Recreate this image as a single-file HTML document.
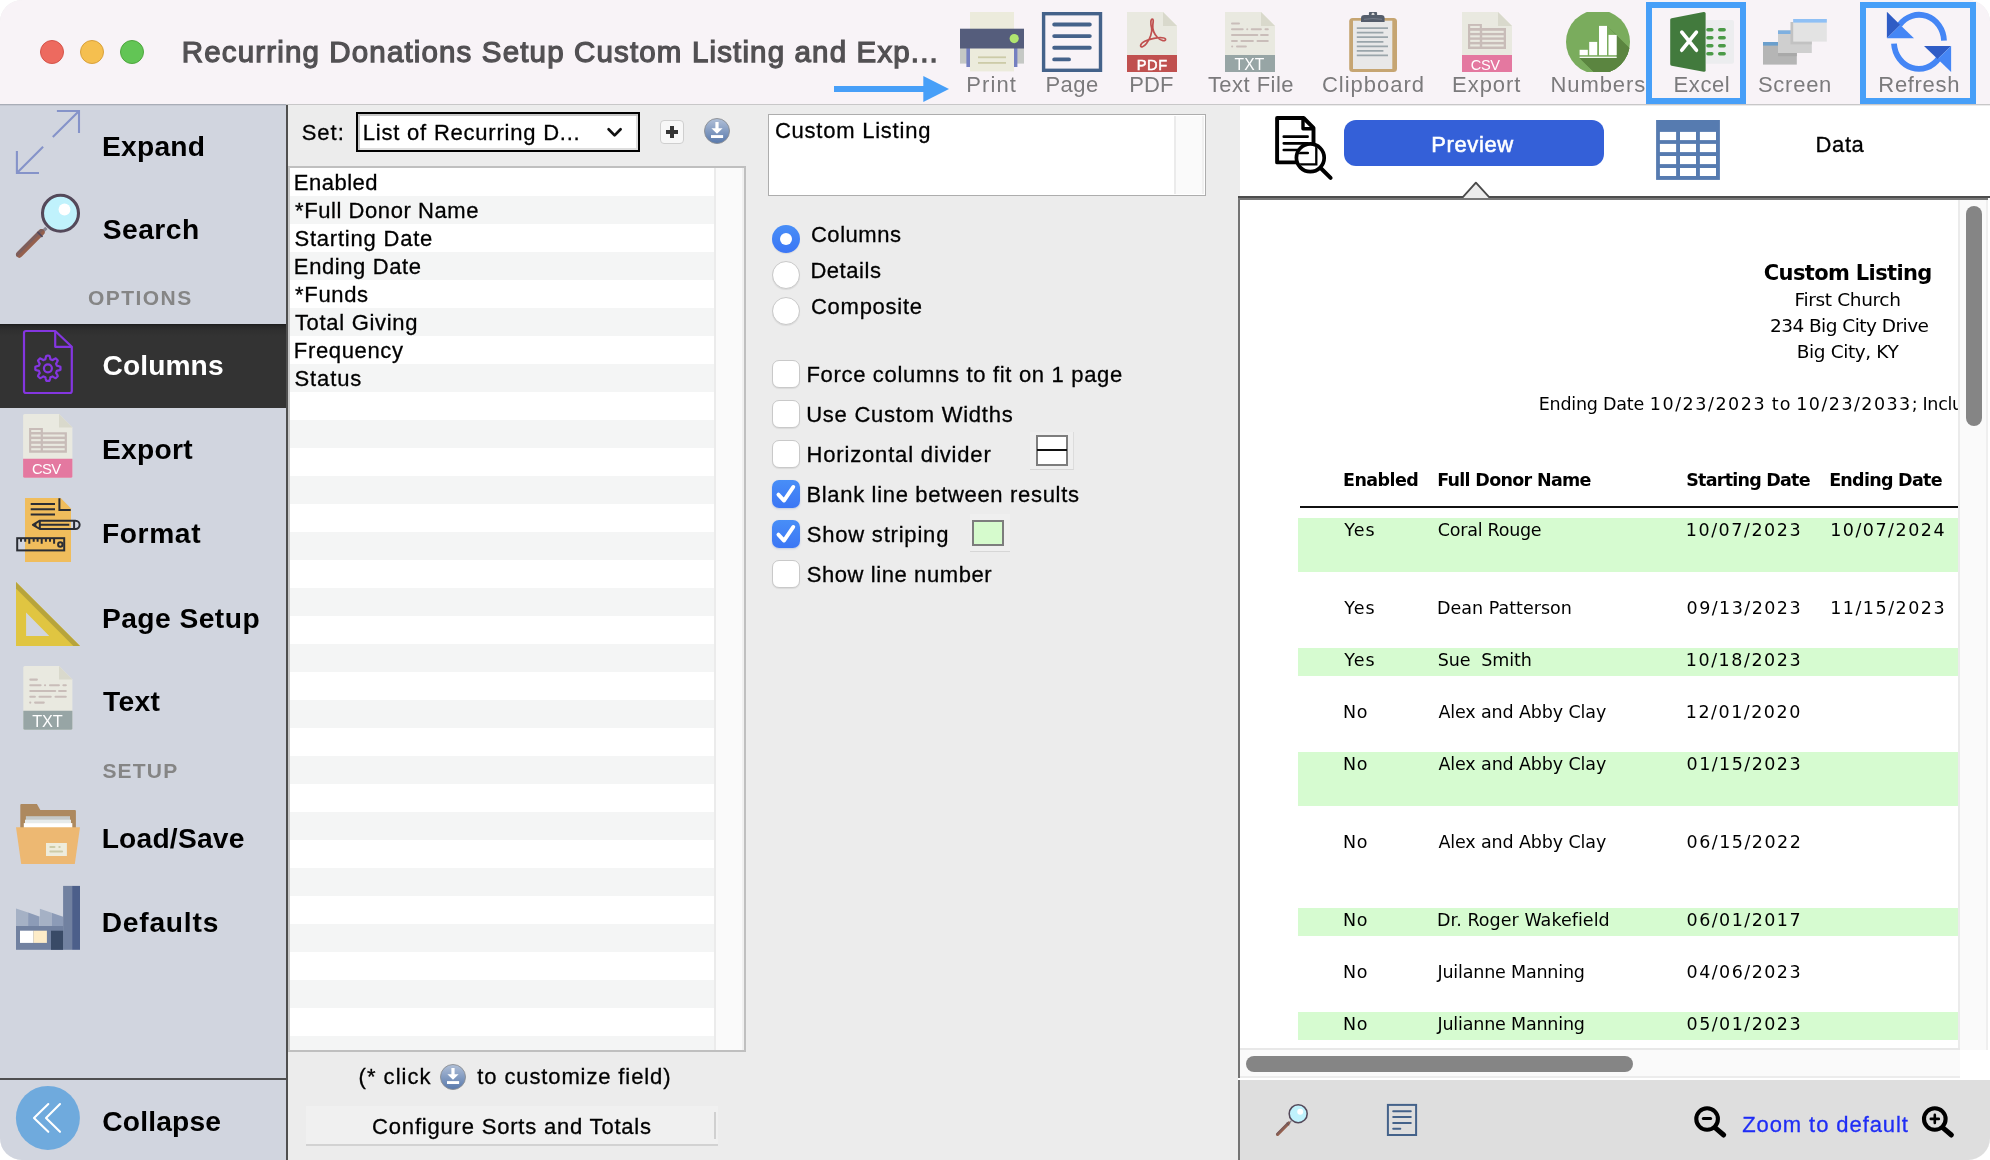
<!DOCTYPE html>
<html lang="en">
<head>
<meta charset="utf-8">
<title>Recurring Donations Setup Custom Listing and Export</title>
<style>
*{box-sizing:border-box;margin:0;padding:0}
html,body{width:1990px;height:1160px;overflow:hidden;background:#fff}
body{font-family:"Liberation Sans",sans-serif;color:#000;position:relative}
.abs{position:absolute}
#win{position:absolute;left:0;top:0;width:1990px;height:1160px;border-radius:22px;overflow:hidden;background:#ececec}
/* ---------- title bar ---------- */
#tbar{position:absolute;left:0;top:0;width:1990px;height:105px;background:#f8f3f7;border-bottom:1px solid #c8c7c8}
.tl{position:absolute;top:40px;width:24px;height:24px;border-radius:50%}
#title{position:absolute;left:183px;top:34px;font-size:29.5px;font-weight:bold;color:#4b4a4c;white-space:nowrap;letter-spacing:-0.2px;line-height:36px}
.tool{position:absolute;top:70px;font-size:22px;color:#7b7a7c;white-space:nowrap;line-height:28px;transform:translateX(-50%)}
.hl{position:absolute;top:2px;height:102px;border:6px solid #479ff8}
/* ---------- sidebar ---------- */
#side{position:absolute;left:0;top:105px;width:286px;height:1055px;background:#d1d5df}
#sideb{position:absolute;left:286px;top:105px;width:2px;height:1055px;background:#4f4f4f}
.si{position:absolute;left:102px;font-size:28px;font-weight:bold;color:#000;white-space:nowrap;line-height:34px}
.sh{position:absolute;font-size:21px;font-weight:bold;color:#858585;white-space:nowrap;line-height:26px;letter-spacing:0.6px}
#sel{position:absolute;left:0;top:219px;width:286px;height:84px;background:linear-gradient(#1c1c1c 0,#282828 2px,#2f2f2f 6px,#333 12px)}
/* ---------- middle ---------- */
#mid{position:absolute;left:288px;top:105px;width:950px;height:1055px;background:#ececec}
.t22{position:absolute;font-size:22px;white-space:nowrap;line-height:28px;color:#000}
#list{position:absolute;left:288px;top:166px;width:458px;height:886px;background:#fff;border:2px solid #bfbfbf;border-left-color:#c9c9c9}
.row{position:absolute;left:0;width:424px;height:28px;font-size:22px;line-height:28px;padding-left:4px;white-space:nowrap}
.row.alt{background:#f4f5f5}
.cb{position:absolute;left:772px;width:28px;height:28px;border-radius:7px;background:#fff;border:1px solid #c9c9c9;box-shadow:0 1px 1px rgba(0,0,0,.08)}
.cb.on{background:linear-gradient(#488ef7,#3b76f5);border:none;box-shadow:0 1px 2px rgba(60,100,200,.25)}
.rd{position:absolute;left:772px;width:28px;height:28px;border-radius:50%;background:#fff;border:1px solid #c9c9c9;box-shadow:0 1px 1px rgba(0,0,0,.08)}
/* ---------- right ---------- */
#right{position:absolute;left:1240px;top:105px;width:750px;height:1055px;background:#fff}
.pv{position:absolute;font-family:"DejaVu Sans","Liberation Sans",sans-serif;font-size:18px;white-space:nowrap;line-height:24px;color:#000}
.stripe{position:absolute;left:1298px;width:660px;background:#d6fbd0}
</style>
</head>
<body>
<div id="win">

<!-- ================= TITLE BAR ================= -->
<div id="tbar">
  <div class="tl" style="left:40px;background:#ed6a5f;border:1px solid #d5544a"></div>
  <div class="tl" style="left:80px;background:#f5bf4f;border:1px solid #d9a13c"></div>
  <div class="tl" style="left:120px;background:#62c555;border:1px solid #4fa73f"></div>
  <svg class="abs" style="left:830px;top:72px" width="122" height="34" viewBox="830 72 122 34"><rect x="834" y="86" width="91" height="6" fill="#479ff8"/><path d="M923.3 76L949 89L923.3 102Z" fill="#479ff8"/></svg>
  <div class="hl" style="left:1646px;width:100px"></div>
  <div class="hl" style="left:1860px;width:116px"></div>
  <!--TOOLICONS_START-->
<svg class="abs" style="left:0;top:0" width="1990" height="104" viewBox="0 0 1990 104">
  <!-- Print -->
  <rect x="970" y="12" width="44" height="18" fill="#ecebdc"/>
  <rect x="960" y="48" width="64" height="15.6" fill="#c5c8c5"/>
  <rect x="966.4" y="48" width="3.6" height="19" fill="#7580c0"/>
  <rect x="1014" y="48" width="3.4" height="19" fill="#7580c0"/>
  <rect x="970" y="48" width="44" height="23.4" fill="#ecebdc"/>
  <rect x="960" y="28.7" width="64" height="19.8" fill="#555d7c"/>
  <circle cx="1014.2" cy="38.6" r="4.6" fill="#b0e570"/>
  <rect x="978" y="56.4" width="28" height="1.8" fill="#cccba8"/>
  <rect x="978" y="62" width="28" height="1.8" fill="#cccba8"/>
  <!-- Page -->
  <rect x="1043.6" y="13.7" width="56.9" height="56.6" fill="none" stroke="#44628a" stroke-width="3.4"/>
  <g stroke="#44628a" stroke-width="3.9" stroke-linecap="round">
    <path d="M1054.2 24.5H1089.8M1054.2 36.1H1089.8M1054.2 47.8H1089.8M1054.2 59.4H1069"/>
  </g>
  <!-- PDF -->
  <path d="M1127 12H1163L1177 26V72H1127Z" fill="#e9e9e0"/>
  <path d="M1163 12L1177 26H1163Z" fill="#d9d9cc"/>
  <rect x="1127" y="55" width="50" height="17" fill="#c0504f"/>
  <path d="M1152.3 19.2C1150.6 19.2 1150.4 23.5 1151.6 28C1152.6 32 1150 39 1146.5 43.6C1144 47 1140.5 48 1140.6 45.6C1140.8 42.5 1147 39.5 1154 38.3C1160 37.2 1165.5 37.5 1165.6 39.4C1165.7 41.6 1161 41.2 1157.5 37.5C1154 33.8 1152.3 29.5 1152.8 25C1153.3 21 1153.6 19.2 1152.3 19.2Z" fill="none" stroke="#c0504f" stroke-width="1.7" stroke-linejoin="round"/>
  <!-- TXT -->
  <path d="M1225 12H1261L1275 26V72H1225Z" fill="#e9e9e0"/>
  <path d="M1261 12L1275 26H1261Z" fill="#d9d9cc"/>
  <rect x="1225" y="55" width="50" height="17" fill="#97a5a5"/>
  <g stroke="#c9bdb9" stroke-width="2" stroke-linecap="round">
    <path d="M1232 23.6H1239"/>
    <path d="M1232 29.3H1242.7M1247.2 29.3H1247.3M1251.7 29.3H1260.9M1265.5 29.3H1267.8"/>
    <path d="M1232 35.1H1257.3M1261 35.1H1267.8"/>
    <path d="M1232 40.9H1236.9M1241.4 40.9H1252.9M1257.5 40.9H1267.8"/>
    <path d="M1232.1 46.6H1232.2M1237 46.6H1245.9"/>
  </g>
  <!-- Clipboard -->
  <rect x="1349.2" y="17.9" width="47.8" height="54.1" rx="3.5" fill="#c6a572"/>
  <rect x="1353" y="20.7" width="39.3" height="48.3" fill="#e8e8e8"/>
  <rect x="1368.9" y="12" width="8.2" height="5" rx="1" fill="#555d6b"/>
  <circle cx="1373" cy="14.2" r="1.4" fill="#d8d8d8"/>
  <path d="M1361 22V18.2Q1361 15 1364.5 15H1381.2Q1384.6 15 1384.6 18.2V22Z" fill="#555d6b"/>
  <path d="M1364 19.3Q1373 17.8 1382 19.3" stroke="#7c8390" stroke-width="0.8" fill="none"/>
  <g stroke="#9aa5aa" stroke-width="1.8">
    <path d="M1356.8 28.2H1388M1356.8 32.7H1383.4M1356.8 37.2H1388M1356.8 41.9H1383.4M1356.8 46.3H1388M1356.8 50.8H1383.4M1356.8 55.3H1388"/>
  </g>
  <!-- CSV -->
  <path d="M1462 12H1498L1512 26V72H1462Z" fill="#e9e9e0"/>
  <path d="M1498 12L1512 26H1498Z" fill="#d9d9cc"/>
  <rect x="1462" y="55" width="50" height="17" fill="#e478a0"/>
  <path d="M1468 23.9H1481.9V28.1H1506V48.9H1468Z" fill="#c8bcb8"/>
  <g fill="#e9e9e0">
    <rect x="1470.2" y="25.9" width="9.6" height="2.1"/>
    <rect x="1470.2" y="30.8" width="9.6" height="2.1"/><rect x="1482.2" y="30.8" width="21.5" height="2.1"/>
    <rect x="1470.2" y="35.3" width="9.6" height="2.1"/><rect x="1482.2" y="35.3" width="21.5" height="2.1"/>
    <rect x="1470.2" y="39.8" width="9.6" height="2.1"/><rect x="1482.2" y="39.8" width="21.5" height="2.1"/>
    <rect x="1470.2" y="44.4" width="9.6" height="2.1"/><rect x="1482.2" y="44.4" width="21.5" height="2.1"/>
  </g>
  <!-- Numbers -->
  <clipPath id="ncl"><rect x="1560" y="12" width="80" height="60"/></clipPath>
  <clipPath id="ncc"><circle cx="1598" cy="42" r="32"/></clipPath>
  <g clip-path="url(#ncl)">
    <circle cx="1598" cy="42" r="32" fill="#7aac5d"/>
    <g clip-path="url(#ncc)">
      <path d="M1607 25.9L1660 78.9V100H1622.2L1579.6 57.9H1616.7V34.9L1607 25.9Z" fill="#5b8540"/>
      <path d="M1607 25.9L1616.7 35.6V57.9H1579.6L1640 118L1680 100L1660 78Z" fill="#5b8540"/>
    </g>
  </g>
  <g fill="#fff">
    <rect x="1579.6" y="49.8" width="8.2" height="5.4"/>
    <rect x="1589.2" y="41.9" width="8" height="13.3"/>
    <rect x="1599" y="25.9" width="8" height="29.3"/>
    <rect x="1608.5" y="34.9" width="8.2" height="20.3"/>
    <rect x="1579.6" y="56.7" width="37.1" height="1.2"/>
  </g>
  <!-- Excel -->
  <rect x="1703" y="19.9" width="31" height="43.8" rx="2" fill="#ecedef"/>
  <g stroke="#4a9a47" stroke-width="3.6" stroke-linecap="round">
    <path d="M1708 29.8H1711.8M1719.8 29.8H1724.1M1708 37.7H1711.8M1719.8 37.7H1724.1M1708 45.8H1711.8M1719.8 45.8H1724.1M1708 53.7H1711.8M1719.8 53.7H1724.1"/>
  </g>
  <path d="M1671.6 18.2L1703.6 12.1Q1705.6 11.8 1705.6 13.6V70.2Q1705.6 72 1703.6 71.7L1671.6 65.8Q1670.2 65.5 1670.2 64V19.8Q1670.2 18.5 1671.6 18.2Z" fill="#427a3d"/>
  <path d="M1681.8 32.2L1696.4 50.2M1696.4 32.2L1681.8 50.2" stroke="#fff" stroke-width="3.7" stroke-linecap="round"/>
  <!-- Screen -->
  <rect x="1763" y="42" width="33.8" height="22.6" fill="#b5b5b5"/>
  <rect x="1763" y="42" width="33.8" height="3.6" fill="#6b9fcd"/>
  <rect x="1778" y="33" width="18.8" height="23.2" fill="#a9a9a9"/>
  <rect x="1778" y="30.4" width="33.8" height="22.6" fill="#cfcfcf"/>
  <rect x="1778" y="30.4" width="33.8" height="3.6" fill="#7fb0e0"/>
  <rect x="1790.5" y="22" width="21.3" height="22.4" fill="#c2c2c2"/>
  <rect x="1793.2" y="19" width="33.6" height="22.6" fill="#e3e3e3"/>
  <rect x="1793.2" y="19" width="33.6" height="3.6" fill="#8fc0f5"/>
  <!-- Refresh -->
  <g fill="none" stroke="#4586f5" stroke-width="5.8">
    <path d="M1899.5 24.9A25 27 0 0 1 1944 40.6"/>
    <path d="M1894 43.6A25 27 0 0 0 1939 58"/>
  </g>
  <path d="M1886.9 11.8V38.3L1900.3 25Z" fill="#2f5cc5"/>
  <path d="M1886.9 38.3H1914L1900.3 25Z" fill="#4586f5"/>
  <path d="M1924 46.1H1951.1L1937.6 59Z" fill="#2f5cc5"/>
  <path d="M1951.1 46.1V72L1937.6 59Z" fill="#4586f5"/>
</svg>
<!--TOOLICONS_END-->
</div>

<!-- ================= SIDEBAR ================= -->
<div id="side">
  <div id="sel"></div>
  <div class="abs" style="left:0;top:973px;width:286px;height:2px;background:#4e4e50"></div>
  <!--SIDEICONS_START-->
<svg class="abs" style="left:0;top:0" width="286" height="1055" viewBox="0 105 286 1055">
  <!-- expand -->
  <g fill="none" stroke="#8593c9" stroke-width="2.1">
    <path d="M56.9 111H79V133M79 111L52.8 137.1"/>
    <path d="M16.9 150.9V173H39M16.9 173L43.1 146.8"/>
  </g>
  <!-- search -->
  <path d="M46.4 227.9L43 231.3" stroke="#8a8793" stroke-width="3.2"/>
  <path d="M41.5 232.3L19.3 254.5" stroke="#95604d" stroke-width="6.4" stroke-linecap="round"/>
  <path d="M39.3 230.1A3.2 3.2 0 0 1 43.8 230L41.5 232.3L19.3 254.5L17 256.8A3.2 3.2 0 0 1 17 252.3Z" fill="#7d5e5c"/>
  <path d="M37.4 231.9L42.5 236.8" stroke="#54495a" stroke-width="1.8"/>
  <circle cx="60.5" cy="213.3" r="18" fill="#c0f2fc" stroke="#54495a" stroke-width="3.1"/>
  <circle cx="64.5" cy="209.5" r="5.9" fill="#fff"/>
  <!-- columns -->
  <g fill="none" stroke="#8436e0" stroke-width="2.2" stroke-linejoin="round">
    <path d="M26 331H55.2L71.8 346.8V391Q71.8 393 69.8 393H26Q24 393 24 391V333Q24 331 26 331Z"/>
    <path d="M55.2 331V346.8H71.8"/>
    <path d="M60.50 368.30 L60.49 368.79 L60.46 369.29 L60.41 369.78 L59.62 370.16 L58.64 370.44 L57.66 370.64 L56.85 370.82 L56.74 371.17 L56.63 371.52 L56.49 371.86 L56.35 372.19 L56.19 372.52 L56.01 372.84 L56.45 373.54 L57.00 374.38 L57.50 375.28 L57.79 376.10 L57.48 376.48 L57.15 376.85 L56.81 377.21 L56.45 377.55 L56.08 377.88 L55.70 378.19 L54.88 377.90 L53.98 377.40 L53.14 376.85 L52.44 376.41 L52.12 376.59 L51.79 376.75 L51.46 376.89 L51.12 377.03 L50.77 377.14 L50.42 377.25 L50.24 378.06 L50.04 379.04 L49.76 380.02 L49.38 380.81 L48.89 380.86 L48.39 380.89 L47.90 380.90 L47.41 380.89 L46.91 380.86 L46.42 380.81 L46.04 380.02 L45.76 379.04 L45.56 378.06 L45.38 377.25 L45.03 377.14 L44.68 377.03 L44.34 376.89 L44.01 376.75 L43.68 376.59 L43.36 376.41 L42.66 376.85 L41.82 377.40 L40.92 377.90 L40.10 378.19 L39.72 377.88 L39.35 377.55 L38.99 377.21 L38.65 376.85 L38.32 376.48 L38.01 376.10 L38.30 375.28 L38.80 374.38 L39.35 373.54 L39.79 372.84 L39.61 372.52 L39.45 372.19 L39.31 371.86 L39.17 371.52 L39.06 371.17 L38.95 370.82 L38.14 370.64 L37.16 370.44 L36.18 370.16 L35.39 369.78 L35.34 369.29 L35.31 368.79 L35.30 368.30 L35.31 367.81 L35.34 367.31 L35.39 366.82 L36.18 366.44 L37.16 366.16 L38.14 365.96 L38.95 365.78 L39.06 365.43 L39.17 365.08 L39.31 364.74 L39.45 364.41 L39.61 364.08 L39.79 363.76 L39.35 363.06 L38.80 362.22 L38.30 361.32 L38.01 360.50 L38.32 360.12 L38.65 359.75 L38.99 359.39 L39.35 359.05 L39.72 358.72 L40.10 358.41 L40.92 358.70 L41.82 359.20 L42.66 359.75 L43.36 360.19 L43.68 360.01 L44.01 359.85 L44.34 359.71 L44.68 359.57 L45.03 359.46 L45.38 359.35 L45.56 358.54 L45.76 357.56 L46.04 356.58 L46.42 355.79 L46.91 355.74 L47.41 355.71 L47.90 355.70 L48.39 355.71 L48.89 355.74 L49.38 355.79 L49.76 356.58 L50.04 357.56 L50.24 358.54 L50.42 359.35 L50.77 359.46 L51.12 359.57 L51.46 359.71 L51.79 359.85 L52.12 360.01 L52.44 360.19 L53.14 359.75 L53.98 359.20 L54.88 358.70 L55.70 358.41 L56.08 358.72 L56.45 359.05 L56.81 359.39 L57.15 359.75 L57.48 360.12 L57.79 360.50 L57.50 361.32 L57.00 362.22 L56.45 363.06 L56.01 363.76 L56.19 364.08 L56.35 364.41 L56.49 364.74 L56.63 365.08 L56.74 365.43 L56.85 365.78 L57.66 365.96 L58.64 366.16 L59.62 366.44 L60.41 366.82 L60.46 367.31 L60.49 367.81 L60.50 368.30Z"/>
    <circle cx="47.9" cy="368.3" r="4"/>
  </g>
  <!-- export csv -->
  <path d="M24.6 414H59L72.4 427.4V476.3Q72.4 477.8 70.9 477.8H24.6Q23.1 477.8 23.1 476.3V415.5Q23.1 414 24.6 414Z" fill="#e9e9e0"/>
  <path d="M59 414L72.4 427.4H59Z" fill="#d9d9cc"/>
  <path d="M23.1 458.8H72.4V476.3Q72.4 477.8 70.9 477.8H24.6Q23.1 477.8 23.1 476.3Z" fill="#e478a0"/>
  <path d="M29.1 428.1H42.9V432.2H66.9V452.8H29.1Z" fill="#c8bcb8"/>
  <g fill="#e9e9e0">
    <rect x="31.2" y="430" width="9.5" height="2"/>
    <rect x="31.2" y="434.5" width="9.5" height="2.1"/><rect x="42.9" y="434.5" width="21.8" height="2.1"/>
    <rect x="31.2" y="439.1" width="9.5" height="2.1"/><rect x="42.9" y="439.1" width="21.8" height="2.1"/>
    <rect x="31.2" y="443.8" width="9.5" height="2.1"/><rect x="42.9" y="443.8" width="21.8" height="2.1"/>
    <rect x="31.2" y="448.2" width="9.5" height="2.1"/><rect x="42.9" y="448.2" width="21.8" height="2.1"/>
  </g>
  <!-- format -->
  <path d="M25 497.9H60.7L71 508.6V562.1H25Z" fill="#f0bd5c"/>
  <g fill="none" stroke="#2a2d34" stroke-width="2">
    <path d="M59.4 498.3V510.1H70.7"/>
    <path d="M30.7 504.1H55M30.7 509.2H55M30.7 514.5H55"/>
    <path d="M39.8 520.7H75.5A4.15 4.15 0 0 1 75.5 529H39.8L32.9 524.85Z" stroke-linejoin="round"/>
    <path d="M39.8 520.7V529M40.7 524.85H69.3M74.1 520.7V529"/>
    <path d="M35.6 523.2V526.5" stroke-width="1.6"/>
    <rect x="17.2" y="538.2" width="47" height="12.2"/>
    <path d="M21 538.2V541.7M25.2 538.2V541.7M29.3 538.2V543.8M33.7 538.2V541.7M37.6 538.2V541.7M41.7 538.2V543.8M45.9 538.2V541.7M50 538.2V541.7M54.1 538.2V543.8"/>
    <circle cx="60.3" cy="544.5" r="2.2"/>
  </g>
  <!-- page setup -->
  <path d="M16 581.9V645.9H80ZM26.1 612.6L49.3 636H26.1Z" fill="#e0c541" fill-rule="evenodd"/>
  <path d="M16 581.9V588.5L73.4 645.9H80Z" fill="#b7a43c"/>
  <!-- text txt -->
  <path d="M24.8 666H59L72.4 679.5V728.3Q72.4 729.8 70.9 729.8H24.8Q23.3 729.8 23.3 728.3V667.5Q23.3 666 24.8 666Z" fill="#e9e9e0"/>
  <path d="M59 666L72.4 679.5H59Z" fill="#d9d9cc"/>
  <path d="M23.3 710.7H72.4V728.3Q72.4 729.8 70.9 729.8H24.8Q23.3 729.8 23.3 728.3Z" fill="#97a5a5"/>
  <g stroke="#c9bdb9" stroke-width="2.1" stroke-linecap="round">
    <path d="M30.3 679.6H36.9"/>
    <path d="M30.3 685.3H40.6M45 685.3H45.1M50 685.3H58.9M63.4 685.3H65.8"/>
    <path d="M30.3 691H55.2M59.1 691H65.8"/>
    <path d="M30.3 696.8H34.9M39.5 696.8H50.7M55.5 696.8H65.8"/>
    <path d="M30.2 702.6H30.3M35.1 702.6H43.8"/>
  </g>
  <!-- load/save -->
  <path d="M21.3 804.1H36.9L40.3 810H74.9Q75.9 810 75.9 811V828H20.3V805.1Q20.3 804.1 21.3 804.1Z" fill="#ad895f"/>
  <rect x="25.9" y="816.2" width="44.1" height="4" fill="#c5c9c8"/>
  <rect x="25" y="819.7" width="46" height="4" fill="#e6ebec"/>
  <rect x="23.8" y="823.1" width="48.5" height="5" fill="#fff"/>
  <path d="M16 827.2H80L74.8 863.9H21.2Z" fill="#edb872"/>
  <rect x="46" y="843" width="20.9" height="13" fill="#eeecdc"/>
  <g stroke="#cccba8" stroke-width="2" stroke-linecap="round">
    <path d="M50.3 847.1H54.5M59.3 847.1H59.7M50.3 851.6H62.1"/>
  </g>
  <!-- defaults factory -->
  <rect x="63.1" y="885.9" width="9" height="63.9" fill="#7181a0"/>
  <rect x="72.1" y="885.9" width="7.9" height="63.9" fill="#4c5f8a"/>
  <rect x="16" y="926" width="47.1" height="23.8" fill="#7181a0"/>
  <path d="M16 908.4L28.1 912.6V926H16Z" fill="#a5b1c5"/>
  <path d="M28.1 912.6L39.3 916.4V926H28.1Z" fill="#8c9bb7"/>
  <path d="M39.9 908.8L51.6 912.8V926H39.3V916.4L39.9 916.4Z" fill="#a5b1c5"/>
  <path d="M51.6 912.8L63.1 916.7V926H51.6Z" fill="#8c9bb7"/>
  <rect x="20" y="930.7" width="13.4" height="12.2" fill="#fff"/>
  <rect x="33.4" y="930.7" width="13.5" height="12.2" fill="#fdecc8"/>
  <rect x="51" y="930.7" width="12.1" height="19.1" fill="#394a66"/>
  <!-- collapse -->
  <circle cx="47.9" cy="1117.9" r="32" fill="#6faadd"/>
  <g fill="none" stroke="#fff" stroke-width="2.1" stroke-linecap="round" stroke-linejoin="round">
    <path d="M48.3 1104L34 1117.9L48.3 1131.8M60 1104L46 1117.9L60 1131.8"/>
  </g>
</svg>
<!--SIDEICONS_END-->
</div>
<div id="sideb"></div>
<div class="abs" style="left:0;top:104px;width:286px;height:1px;background:#a9adb7"></div>
<div class="abs" style="left:0;top:105px;width:286px;height:1px;background:#c4c8d2"></div>

<!-- ================= MIDDLE ================= -->
<div id="mid"></div>
<div class="abs" style="left:356px;top:112px;width:284px;height:40px;background:#fff;border:2px solid #000;box-shadow:inset 2px 2px 0 0 #c6c6c6,inset -2px -2px 0 0 #dedede"></div>
<svg class="abs" style="left:604px;top:122px" width="22" height="18" viewBox="604 122 22 18"><path d="M608.6 129.2L614.6 135.4L620.6 129.2" fill="none" stroke="#111" stroke-width="2.7" stroke-linecap="round" stroke-linejoin="round"/></svg>
<div class="abs" style="left:660px;top:120px;width:24px;height:24px;background:#f7f7f7;border:1px solid #cfcfcf;border-radius:4px"></div>
<div class="abs" style="left:666px;top:130px;width:12px;height:4px;background:#343434"></div>
<div class="abs" style="left:670px;top:126px;width:4px;height:12px;background:#343434"></div>
<!--DLICON1_START-->
<svg class="abs" style="left:702px;top:116px" width="30" height="30" viewBox="-15 -15 30 30">
  <defs><linearGradient id="dlg1" x1="0" y1="0" x2="0" y2="1"><stop offset="0" stop-color="#b1c0d8"/><stop offset="1" stop-color="#5778ab"/></linearGradient></defs>
  <circle cx="0" cy="0" r="12.5" fill="url(#dlg1)" stroke="#8a8d92" stroke-width="0.9"/>
  <path d="M-1.6 -8.9H1.6V-2.8H5.6L0 2.7L-5.6 -2.8H-1.6Z" fill="#fff"/>
  <rect x="-6" y="4.1" width="12.1" height="2.9" fill="#fff"/>
</svg>
<!--DLICON1_END-->

<div id="list">
  <div class="row" style="top:0"></div>
  <div class="row alt" style="top:28px"></div>
  <div class="row" style="top:56px"></div>
  <div class="row alt" style="top:84px"></div>
  <div class="row" style="top:112px"></div>
  <div class="row alt" style="top:140px"></div>
  <div class="row" style="top:168px"></div>
  <div class="row alt" style="top:196px"></div>
  <div class="row alt" style="top:252px;height:28px"></div>
  <div class="row alt" style="top:308px;height:28px"></div>
  <div class="row alt" style="top:364px;height:28px"></div>
  <div class="row alt" style="top:420px;height:28px"></div>
  <div class="row alt" style="top:476px;height:28px"></div>
  <div class="row alt" style="top:532px;height:28px"></div>
  <div class="row alt" style="top:588px;height:28px"></div>
  <div class="row alt" style="top:644px;height:28px"></div>
  <div class="row alt" style="top:700px;height:28px"></div>
  <div class="row alt" style="top:756px;height:28px"></div>
  <div class="row alt" style="top:812px;height:28px"></div>
  <div class="row alt" style="top:868px;height:14px"></div>
  <!--ALTROWS-->
  <div class="abs" style="left:424px;top:0;width:30px;height:882px;background:#fafafa;border-left:2px solid #ebebeb;border-right:2px solid #f0f0f0"></div>
</div>
<!--DLICON2_START-->
<svg class="abs" style="left:438px;top:1061.6px" width="30" height="30" viewBox="-15 -15 30 30">
  <defs><linearGradient id="dlg2" x1="0" y1="0" x2="0" y2="1"><stop offset="0" stop-color="#b1c0d8"/><stop offset="1" stop-color="#5778ab"/></linearGradient></defs>
  <circle cx="0" cy="0" r="12.5" fill="url(#dlg2)" stroke="#8a8d92" stroke-width="0.9"/>
  <path d="M-1.6 -8.9H1.6V-2.8H5.6L0 2.7L-5.6 -2.8H-1.6Z" fill="#fff"/>
  <rect x="-6" y="4.1" width="12.1" height="2.9" fill="#fff"/>
</svg>
<!--DLICON2_END-->
<div class="abs" style="left:306px;top:1106px;width:412px;height:40px;background:#f0f0f0;border-bottom:2px solid #d2d2d2"></div>
<div class="abs" style="left:714px;top:1112px;width:2px;height:27px;background:#d0d0d0"></div>

<div class="abs" style="left:768px;top:114px;width:438px;height:82px;background:#fff;border:1px solid #adadad"></div>
<div class="abs" style="left:1174px;top:116px;width:30px;height:78px;background:#fafafa;border-left:2px solid #ebebeb;border-right:2px solid #f0f0f0"></div>

<div class="rd" style="top:225px;background:linear-gradient(#488ef7,#3b76f5);border:none"></div>
<div class="abs" style="left:779.7px;top:232.5px;width:12.6px;height:12.6px;border-radius:50%;background:#fff"></div>
<div class="rd" style="top:261px"></div>
<div class="rd" style="top:297px"></div>

<div class="cb" style="top:360px"></div>
<div class="cb" style="top:400px"></div>
<div class="cb" style="top:440px"></div>
<div class="cb on" style="top:480px"></div>
<div class="cb on" style="top:520px"></div>
<div class="cb" style="top:560px"></div>
<svg class="abs" style="left:772px;top:480px" width="28" height="28" viewBox="0 0 28 28"><path d="M6.4 14.6 L12 20.6 L21.3 6.9" fill="none" stroke="#fff" stroke-width="3.8" stroke-linecap="round" stroke-linejoin="round"/></svg>
<svg class="abs" style="left:772px;top:520px" width="28" height="28" viewBox="0 0 28 28"><path d="M6.4 14.6 L12 20.6 L21.3 6.9" fill="none" stroke="#fff" stroke-width="3.8" stroke-linecap="round" stroke-linejoin="round"/></svg>
<div class="abs" style="left:1030px;top:432px;width:44px;height:38px;background:#efefef;border-bottom:1px solid #d6d6d6;border-right:1px solid #dcdcdc"></div>
<div class="abs" style="left:1036px;top:434.5px;width:32px;height:31px;background:#fff;border:2px solid #7d7d7d"></div>
<div class="abs" style="left:1037px;top:449px;width:30px;height:2px;background:#111"></div>
<div class="abs" style="left:970px;top:514px;width:40px;height:38px;background:#efefef;border-bottom:1px solid #d6d6d6"></div>
<div class="abs" style="left:972.3px;top:520.3px;width:31.6px;height:25.5px;background:#d6fbcd;border:2px solid #7d7d7d"></div>

<!-- ================= RIGHT ================= -->
<div id="right"></div>
<div class="abs" style="left:1240px;top:105px;width:750px;height:1px;background:#ebebeb"></div>
<div class="abs" style="left:1238px;top:196px;width:2px;height:964px;background:#747474"></div>
<div class="abs" style="left:1344px;top:120px;width:260px;height:46px;border-radius:12px;background:#3460d8"></div>
<div class="abs" style="left:1238px;top:196px;width:752px;height:2px;background:#4d4d4d"></div>
<div class="abs" style="left:1238px;top:198px;width:750px;height:2px;background:#777"></div>
<svg class="abs" style="left:1455px;top:178px" width="42" height="20" viewBox="1455 178 42 20"><path d="M1462.4 198L1475.9 182.7L1489.6 198Z" fill="#ececec"/><path d="M1462.2 197.8L1475.9 182.7L1489.8 197.8" fill="none" stroke="#4a4a4a" stroke-width="1.9" stroke-linejoin="round"/></svg>
<!--RIGHTICONS_START-->
<svg class="abs" style="left:1260px;top:105px" width="480" height="92" viewBox="1260 105 480 92">
  <!-- preview doc + magnifier -->
  <g fill="none" stroke="#000" stroke-linejoin="round">
    <path d="M1277.1 118H1303.6L1313.5 127.9V162.4H1277.1Z" stroke-width="3.9"/>
    <path d="M1303 119V128.7H1312.5" stroke-width="3.4"/>
    <path d="M1283.8 136.7H1307.6M1283.8 143.3H1307.6M1283.8 150H1300" stroke-width="2.7" stroke-linecap="round"/>
  </g>
  <circle cx="1310.3" cy="157.8" r="13.9" fill="#fff" stroke="#000" stroke-width="3.7"/>
  <clipPath id="mgc"><circle cx="1310.3" cy="157.8" r="12.2"/></clipPath>
  <g clip-path="url(#mgc)" fill="none" stroke="#000">
    <path d="M1316.3 143V164.4H1296" stroke-width="2.3"/>
    <path d="M1299.5 153.1H1307.8" stroke-width="2.5" stroke-linecap="round"/>
  </g>
  <path d="M1320.6 168L1330.6 177.9" stroke="#000" stroke-width="4" stroke-linecap="round"/>
  <!-- data grid -->
  <rect x="1656.1" y="120" width="63.8" height="59.9" fill="#567bb0"/>
  <g fill="#fff">
    <rect x="1659.9" y="131.9" width="16.2" height="8.2"/><rect x="1680" y="131.9" width="16" height="8.2"/><rect x="1699.9" y="131.9" width="16.1" height="8.2"/>
    <rect x="1659.9" y="143.9" width="16.2" height="8.2"/><rect x="1680" y="143.9" width="16" height="8.2"/><rect x="1699.9" y="143.9" width="16.1" height="8.2"/>
    <rect x="1659.9" y="156" width="16.2" height="8.1"/><rect x="1680" y="156" width="16" height="8.1"/><rect x="1699.9" y="156" width="16.1" height="8.1"/>
    <rect x="1659.9" y="168" width="16.2" height="8"/><rect x="1680" y="168" width="16" height="8"/><rect x="1699.9" y="168" width="16.1" height="8"/>
  </g>
</svg>
<!--RIGHTICONS_END-->

<!-- preview content -->










<div class="abs" style="left:1300px;top:506px;width:658px;height:2px;background:#111"></div>

<div class="stripe" style="top:518px;height:54px"></div>
<div class="stripe" style="top:648px;height:28px"></div>
<div class="stripe" style="top:752px;height:54px"></div>
<div class="stripe" style="top:908px;height:28px"></div>
<div class="stripe" style="top:1012px;height:28px"></div>













<!-- scrollbars -->
<div class="abs" style="left:1958px;top:200px;width:30px;height:850px;background:#fafafa;border-left:2px solid #ebebeb;border-right:2px solid #efefef"></div>
<div class="abs" style="left:1966px;top:206px;width:16px;height:220px;border-radius:8px;background:#858585"></div>
<div class="abs" style="left:1240px;top:1048px;width:720px;height:30px;background:#fafafa;border-top:2px solid #e8e8e8;border-bottom:2px solid #ececec"></div>
<div class="abs" style="left:1960px;top:1050px;width:30px;height:30px;background:#fff"></div>
<div class="abs" style="left:1246px;top:1056px;width:387px;height:16px;border-radius:8px;background:#858585"></div>

<!-- bottom bar -->
<div class="abs" style="left:1240px;top:1080px;width:750px;height:80px;background:#dedede"></div>
<div class="abs" style="left:1238px;top:1078px;width:752px;height:2px;background:#fff"></div>
<!--TEXTS_START-->
<style>
.k0{position:absolute;white-space:nowrap;font:normal 29.5px/38px "Liberation Sans",sans-serif;color:#525053}
.k1{position:absolute;white-space:nowrap;font:normal 22px/29px "Liberation Sans",sans-serif;color:#7b7a7c}
.k2{position:absolute;white-space:nowrap;font:normal 14.6px/19px "Liberation Sans",sans-serif;color:#fff}
.k3{position:absolute;white-space:nowrap;font:normal 15.6px/20px "Liberation Sans",sans-serif;color:#fff}
.k4{position:absolute;white-space:nowrap;font:normal 14.8px/19px "Liberation Sans",sans-serif;color:#fff}
.k5{position:absolute;white-space:nowrap;font:normal 16.3px/21px "Liberation Sans",sans-serif;color:#fff}
.k6{position:absolute;white-space:nowrap;font:bold 28.2px/37px "Liberation Sans",sans-serif;color:#000}
.k7{position:absolute;white-space:nowrap;font:bold 21px/27px "Liberation Sans",sans-serif;color:#858585}
.k8{position:absolute;white-space:nowrap;font:bold 28.2px/37px "Liberation Sans",sans-serif;color:#fff}
.k9{position:absolute;white-space:nowrap;font:normal 22px/29px "Liberation Sans",sans-serif;color:#000}
.k10{position:absolute;white-space:nowrap;font:normal 22px/29px "Liberation Sans",sans-serif;color:#fff}
.k11{position:absolute;white-space:nowrap;font:bold 21px/27px "DejaVu Sans","Liberation Sans",sans-serif;color:#000}
.k12{position:absolute;white-space:nowrap;font:normal 18.5px/24px "DejaVu Sans","Liberation Sans",sans-serif;color:#000}
.k13{position:absolute;white-space:nowrap;font:normal 17.5px/23px "DejaVu Sans","Liberation Sans",sans-serif;color:#000}
.k14{position:absolute;white-space:nowrap;font:bold 17.5px/23px "DejaVu Sans","Liberation Sans",sans-serif;color:#000}
.k15{position:absolute;white-space:nowrap;font:normal 22px/29px "Liberation Sans",sans-serif;color:#1f2df5}
</style>
<div style="position:absolute;left:0;top:0;width:1990px;height:1160px;will-change:transform">
<div id="t_ttl" class="k0" style="left:181.79px;top:33px;letter-spacing:1.148px;-webkit-text-stroke:1.25px #525053">Recurring Donations Setup Custom Listing and Exp...</div>
<div id="t_tl1" class="k1" style="left:966.17px;top:70px;letter-spacing:1.142px">Print</div>
<div id="t_tl2" class="k1" style="left:1045.50px;top:70px;letter-spacing:0.421px">Page</div>
<div id="t_tl3" class="k1" style="left:1129.35px;top:70px;letter-spacing:0.043px">PDF</div>
<div id="t_tl4" class="k1" style="left:1207.90px;top:70px;letter-spacing:0.470px">Text File</div>
<div id="t_tl5" class="k1" style="left:1321.92px;top:70px;letter-spacing:0.985px">Clipboard</div>
<div id="t_tl6" class="k1" style="left:1452.09px;top:70px;letter-spacing:0.943px">Export</div>
<div id="t_tl7" class="k1" style="left:1550.59px;top:70px;letter-spacing:0.887px">Numbers</div>
<div id="t_tl8" class="k1" style="left:1673.59px;top:70px;letter-spacing:0.569px">Excel</div>
<div id="t_tl9" class="k1" style="left:1757.90px;top:70px;letter-spacing:0.750px">Screen</div>
<div id="t_tl10" class="k1" style="left:1878.35px;top:70px;letter-spacing:0.674px">Refresh</div>
<div id="t_i1" class="k2" style="left:1136.82px;top:56px;letter-spacing:0.547px;-webkit-text-stroke:0.5px #fff">PDF</div>
<div id="t_i2" class="k3" style="left:1234.47px;top:55px;letter-spacing:0.183px">TXT</div>
<div id="t_i3" class="k2" style="left:1470.81px;top:56px;letter-spacing:-0.407px">CSV</div>
<div id="t_i4" class="k4" style="left:32.01px;top:460px;letter-spacing:-0.645px">CSV</div>
<div id="t_i5" class="k5" style="left:32.24px;top:711px;letter-spacing:-0.176px">TXT</div>
<div id="t_s1" class="k6" style="left:101.91px;top:128px;letter-spacing:0.264px">Expand</div>
<div id="t_s2" class="k6" style="left:102.71px;top:211px;letter-spacing:0.486px">Search</div>
<div id="t_s3" class="k7" style="left:87.89px;top:284px;letter-spacing:1.478px">OPTIONS</div>
<div id="t_s4" class="k8" style="left:102.58px;top:347px;letter-spacing:0.070px">Columns</div>
<div id="t_s5" class="k6" style="left:101.91px;top:431px;letter-spacing:0.283px">Export</div>
<div id="t_s6" class="k6" style="left:101.91px;top:515px;letter-spacing:0.619px">Format</div>
<div id="t_s7" class="k6" style="left:101.91px;top:600px;letter-spacing:0.465px">Page Setup</div>
<div id="t_s8" class="k6" style="left:103.03px;top:683px;letter-spacing:0.366px">Text</div>
<div id="t_s9" class="k7" style="left:102.40px;top:757px;letter-spacing:1.183px">SETUP</div>
<div id="t_s10" class="k6" style="left:101.65px;top:820px;letter-spacing:0.217px">Load/Save</div>
<div id="t_s11" class="k6" style="left:101.65px;top:904px;letter-spacing:0.782px">Defaults</div>
<div id="t_s12" class="k6" style="left:102.22px;top:1103px;letter-spacing:0.188px">Collapse</div>
<div id="t_m1" class="k9" style="left:301.71px;top:118px;letter-spacing:0.997px;-webkit-text-stroke:0.3px #000">Set:</div>
<div id="t_m2" class="k9" style="left:362.86px;top:118px;letter-spacing:0.778px;-webkit-text-stroke:0.3px #000">List of Recurring D...</div>
<div id="t_r1" class="k9" style="left:293.86px;top:168px;letter-spacing:0.475px;-webkit-text-stroke:0.3px #000">Enabled</div>
<div id="t_r2" class="k9" style="left:295.12px;top:196px;letter-spacing:0.563px;-webkit-text-stroke:0.3px #000">*Full Donor Name</div>
<div id="t_r3" class="k9" style="left:294.43px;top:224px;letter-spacing:0.790px;-webkit-text-stroke:0.3px #000">Starting Date</div>
<div id="t_r4" class="k9" style="left:293.87px;top:252px;letter-spacing:0.597px;-webkit-text-stroke:0.3px #000">Ending Date</div>
<div id="t_r5" class="k9" style="left:295.12px;top:280px;letter-spacing:0.651px;-webkit-text-stroke:0.3px #000">*Funds</div>
<div id="t_r6" class="k9" style="left:294.89px;top:308px;letter-spacing:0.697px;-webkit-text-stroke:0.3px #000">Total Giving</div>
<div id="t_r7" class="k9" style="left:293.86px;top:336px;letter-spacing:0.639px;-webkit-text-stroke:0.3px #000">Frequency</div>
<div id="t_r8" class="k9" style="left:294.44px;top:364px;letter-spacing:0.889px;-webkit-text-stroke:0.3px #000">Status</div>
<div id="t_m3" class="k9" style="left:358.57px;top:1062px;letter-spacing:1.017px;-webkit-text-stroke:0.3px #000">(* click</div>
<div id="t_m4" class="k9" style="left:477.32px;top:1062px;letter-spacing:0.881px;-webkit-text-stroke:0.3px #000">to customize field)</div>
<div id="t_m5" class="k9" style="left:372.11px;top:1112px;letter-spacing:0.804px;-webkit-text-stroke:0.3px #000">Configure Sorts and Totals</div>
<div id="t_m6" class="k9" style="left:774.96px;top:116px;letter-spacing:0.763px;-webkit-text-stroke:0.3px #000">Custom Listing</div>
<div id="t_m7" class="k9" style="left:810.95px;top:220px;letter-spacing:0.536px;-webkit-text-stroke:0.3px #000">Columns</div>
<div id="t_m8" class="k9" style="left:810.41px;top:256px;letter-spacing:0.539px;-webkit-text-stroke:0.3px #000">Details</div>
<div id="t_m9" class="k9" style="left:810.95px;top:292px;letter-spacing:0.747px;-webkit-text-stroke:0.3px #000">Composite</div>
<div id="t_c1" class="k9" style="left:806.41px;top:360px;letter-spacing:0.686px;-webkit-text-stroke:0.3px #000">Force columns to fit on 1 page</div>
<div id="t_c2" class="k9" style="left:806.18px;top:400px;letter-spacing:0.758px;-webkit-text-stroke:0.3px #000">Use Custom Widths</div>
<div id="t_c3" class="k9" style="left:806.41px;top:440px;letter-spacing:0.846px;-webkit-text-stroke:0.3px #000">Horizontal divider</div>
<div id="t_c4" class="k9" style="left:806.40px;top:480px;letter-spacing:0.678px;-webkit-text-stroke:0.3px #000">Blank line between results</div>
<div id="t_c5" class="k9" style="left:806.71px;top:520px;letter-spacing:0.800px;-webkit-text-stroke:0.3px #000">Show striping</div>
<div id="t_c6" class="k9" style="left:806.71px;top:560px;letter-spacing:0.589px;-webkit-text-stroke:0.3px #000">Show line number</div>
<div id="t_p1" class="k10" style="left:1431.23px;top:130px;letter-spacing:0.623px;-webkit-text-stroke:0.55px #fff">Preview</div>
<div id="t_p2" class="k9" style="left:1815.56px;top:130px;letter-spacing:0.612px;-webkit-text-stroke:0.3px #000">Data</div>
<div id="t_v1" class="k11" style="left:1763.82px;top:260px;letter-spacing:-0.637px">Custom Listing</div>
<div id="t_v2" class="k12" style="left:1794.52px;top:288px;letter-spacing:-0.354px">First Church</div>
<div id="t_v3" class="k12" style="left:1769.91px;top:314px;letter-spacing:-0.534px">234 Big City Drive</div>
<div id="t_v4" class="k12" style="left:1796.77px;top:340px;letter-spacing:-0.393px">Big City, KY</div>
<div id="t_f1" class="k13" style="left:1538.79px;top:393px;letter-spacing:-0.234px">Ending Date</div>
<div id="t_f2" class="k13" style="left:1649.81px;top:393px;letter-spacing:1.551px">10/23/2023</div>
<div id="t_f3" class="k13" style="left:1771.64px;top:393px;letter-spacing:1.332px">to</div>
<div id="t_f4" class="k13" style="left:1796.28px;top:393px;letter-spacing:1.453px">10/23/2033;</div>
<div id="t_h1" class="k14" style="left:1343.03px;top:469px;letter-spacing:-0.574px">Enabled</div>
<div id="t_h2" class="k14" style="left:1437.15px;top:469px;letter-spacing:-0.688px">Full Donor Name</div>
<div id="t_h3" class="k14" style="left:1686.28px;top:469px;letter-spacing:-0.757px">Starting Date</div>
<div id="t_h4" class="k14" style="left:1829.15px;top:469px;letter-spacing:-0.722px">Ending Date</div>
<div id="t_z1" class="k15" style="left:1742.18px;top:1110px;letter-spacing:0.919px;-webkit-text-stroke:0.3px #1f2df5">Zoom to default</div>
<div id="t_a0" class="k13" style="left:1344.30px;top:519px;letter-spacing:1.074px">Yes</div>
<div id="t_b0" class="k13" style="left:1437.87px;top:519px;letter-spacing:-0.259px">Coral Rouge</div>
<div id="t_d0" class="k13" style="left:1685.77px;top:519px;letter-spacing:1.547px">10/07/2023</div>
<div id="t_e0" class="k13" style="left:1830.14px;top:519px;letter-spacing:1.510px">10/07/2024</div>
<div id="t_a1" class="k13" style="left:1344.30px;top:597px;letter-spacing:1.073px">Yes</div>
<div id="t_b1" class="k13" style="left:1437.03px;top:597px;letter-spacing:0.006px">Dean Patterson</div>
<div id="t_d1" class="k13" style="left:1686.58px;top:597px;letter-spacing:1.458px">09/13/2023</div>
<div id="t_e1" class="k13" style="left:1830.14px;top:597px;letter-spacing:1.515px">11/15/2023</div>
<div id="t_a2" class="k13" style="left:1344.30px;top:649px;letter-spacing:1.074px">Yes</div>
<div id="t_b2" class="k13" style="left:1437.65px;top:649px;letter-spacing:-0.100px">Sue&nbsp; Smith</div>
<div id="t_d2" class="k13" style="left:1685.77px;top:649px;letter-spacing:1.547px">10/18/2023</div>
<div id="t_a3" class="k13" style="left:1342.91px;top:701px;letter-spacing:0.676px">No</div>
<div id="t_b3" class="k13" style="left:1438.42px;top:701px;letter-spacing:-0.121px">Alex and Abby Clay</div>
<div id="t_d3" class="k13" style="left:1685.76px;top:701px;letter-spacing:1.522px">12/01/2020</div>
<div id="t_a4" class="k13" style="left:1342.92px;top:753px;letter-spacing:0.664px">No</div>
<div id="t_b4" class="k13" style="left:1438.43px;top:753px;letter-spacing:-0.122px">Alex and Abby Clay</div>
<div id="t_d4" class="k13" style="left:1686.58px;top:753px;letter-spacing:1.457px">01/15/2023</div>
<div id="t_a5" class="k13" style="left:1342.91px;top:831px;letter-spacing:0.676px">No</div>
<div id="t_b5" class="k13" style="left:1438.42px;top:831px;letter-spacing:-0.121px">Alex and Abby Clay</div>
<div id="t_d5" class="k13" style="left:1686.58px;top:831px;letter-spacing:1.489px">06/15/2022</div>
<div id="t_a6" class="k13" style="left:1342.92px;top:909px;letter-spacing:0.664px">No</div>
<div id="t_b6" class="k13" style="left:1437.04px;top:909px;letter-spacing:0.045px">Dr. Roger Wakefield</div>
<div id="t_d6" class="k13" style="left:1686.58px;top:909px;letter-spacing:1.457px">06/01/2017</div>
<div id="t_a7" class="k13" style="left:1342.91px;top:961px;letter-spacing:0.676px">No</div>
<div id="t_b7" class="k13" style="left:1437.46px;top:961px;letter-spacing:-0.184px">Juilanne Manning</div>
<div id="t_d7" class="k13" style="left:1686.58px;top:961px;letter-spacing:1.458px">04/06/2023</div>
<div id="t_a8" class="k13" style="left:1342.92px;top:1013px;letter-spacing:0.664px">No</div>
<div id="t_b8" class="k13" style="left:1437.47px;top:1013px;letter-spacing:-0.186px">Julianne Manning</div>
<div id="t_d8" class="k13" style="left:1686.58px;top:1013px;letter-spacing:1.457px">05/01/2023</div>
<div class="abs" style="left:1900px;top:388px;width:58px;height:30px;overflow:hidden"><div class="k13" style="left:22.5px;top:5px;letter-spacing:-0.3px">Including</div></div>
</div>
<!--TEXTS_END-->
<!--BOTTOMICONS_START-->
<svg class="abs" style="left:1260px;top:1090px" width="720" height="60" viewBox="1260 1090 720 60">
  <!-- small magnifier -->
  <g transform="translate(1298.2 1113.7) scale(0.5) translate(-60.5 -213.3)">
    <path d="M46.4 227.9L43 231.3" stroke="#8a8793" stroke-width="3.2"/>
    <path d="M41.5 232.3L19.3 254.5" stroke="#95604d" stroke-width="6.4" stroke-linecap="round"/>
    <path d="M39.3 230.1A3.2 3.2 0 0 1 43.8 230L41.5 232.3L19.3 254.5L17 256.8A3.2 3.2 0 0 1 17 252.3Z" fill="#7d5e5c"/>
    <path d="M37.4 231.9L42.5 236.8" stroke="#54495a" stroke-width="1.8"/>
    <circle cx="60.5" cy="213.3" r="18" fill="#c0f2fc" stroke="#54495a" stroke-width="3.1"/>
    <circle cx="64.5" cy="209.5" r="5.9" fill="#fff"/>
  </g>
  <!-- small page -->
  <rect x="1387.9" y="1104.9" width="28.2" height="30.1" fill="none" stroke="#44628a" stroke-width="2"/>
  <path d="M1393.2 1111.3H1410.8M1393.2 1117.1H1410.8M1393.2 1123H1410.8M1393.2 1128.8H1400.3" stroke="#44628a" stroke-width="2" stroke-linecap="round"/>
  <!-- zoom out -->
  <circle cx="1707.1" cy="1119" r="10.8" fill="none" stroke="#000" stroke-width="4.1"/>
  <path d="M1703.3 1118.5H1710.6" stroke="#000" stroke-width="3" stroke-linecap="round"/>
  <path d="M1715 1127.6L1723.7 1135" stroke="#000" stroke-width="5" stroke-linecap="round"/>
  <!-- zoom in -->
  <circle cx="1934.8" cy="1119" r="10.8" fill="none" stroke="#000" stroke-width="4.1"/>
  <path d="M1930.8 1118.9H1938.8M1934.8 1114.9V1122.9" stroke="#000" stroke-width="2.6" stroke-linecap="round"/>
  <path d="M1942.7 1127.6L1951.4 1135" stroke="#000" stroke-width="5" stroke-linecap="round"/>
</svg>
<!--BOTTOMICONS_END-->

</div>
</body>
</html>
